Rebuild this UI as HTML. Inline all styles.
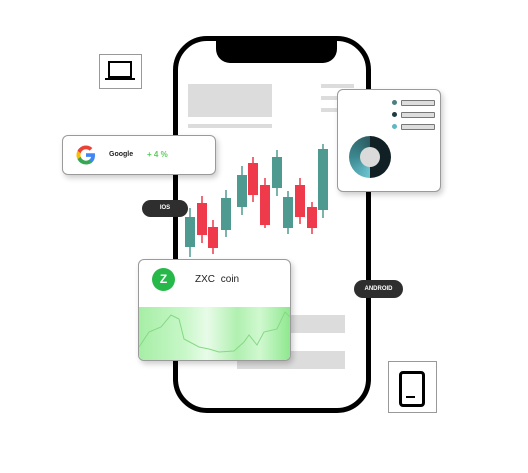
<!DOCTYPE html>
<html><head><style>
body{margin:0;width:528px;height:473px;background:#fff;position:relative;overflow:hidden;font-family:"Liberation Sans",sans-serif}
.a{position:absolute}
.g{background:#dcdcdc}
.card{background:#fff;border:1px solid #9a9a9a;border-radius:6px;box-shadow:2px 3px 6px rgba(0,0,0,.2)}
.pill{background:#2e2e2e;color:#fff;font-size:6px;font-weight:bold;border-radius:9px;text-align:center}
</style></head><body>
<div class="a" style="left:173px;top:36px;width:188px;height:367px;border:5px solid #000;border-radius:34px"></div>
<div class="a" style="left:216px;top:36px;width:121px;height:27px;background:#000;border-radius:0 0 14px 14px"></div>
<div class="a g" style="left:188px;top:84px;width:84px;height:33px"></div>
<div class="a g" style="left:188px;top:124px;width:84px;height:4px"></div>
<div class="a g" style="left:321px;top:84px;width:33px;height:4px"></div>
<div class="a g" style="left:321px;top:96px;width:33px;height:4px"></div>
<div class="a g" style="left:321px;top:108px;width:33px;height:4px"></div>
<div class="a g" style="left:237px;top:315px;width:108px;height:18px"></div>
<div class="a g" style="left:237px;top:351px;width:108px;height:18px"></div>
<svg class="a" style="left:0;top:0" width="528" height="473">
<g stroke-width="1.5">
<line x1="190" y1="208" x2="190" y2="257" stroke="#4f9a90"/><rect x="185" y="217" width="10" height="30" fill="#4f9a90"/>
<line x1="202" y1="196" x2="202" y2="243" stroke="#ee3a4b"/><rect x="197" y="203" width="10" height="32" fill="#ee3a4b"/>
<line x1="213" y1="220" x2="213" y2="254" stroke="#ee3a4b"/><rect x="208" y="227" width="10" height="21" fill="#ee3a4b"/>
<line x1="226" y1="190" x2="226" y2="237" stroke="#4f9a90"/><rect x="221" y="198" width="10" height="32" fill="#4f9a90"/>
<line x1="242" y1="166" x2="242" y2="215" stroke="#4f9a90"/><rect x="237" y="175" width="10" height="32" fill="#4f9a90"/>
<line x1="253" y1="157" x2="253" y2="202" stroke="#ee3a4b"/><rect x="248" y="163" width="10" height="32" fill="#ee3a4b"/>
<line x1="265" y1="178" x2="265" y2="228" stroke="#ee3a4b"/><rect x="260" y="185" width="10" height="40" fill="#ee3a4b"/>
<line x1="277" y1="150" x2="277" y2="196" stroke="#4f9a90"/><rect x="272" y="157" width="10" height="31" fill="#4f9a90"/>
<line x1="288" y1="191" x2="288" y2="234" stroke="#4f9a90"/><rect x="283" y="197" width="10" height="31" fill="#4f9a90"/>
<line x1="300" y1="178" x2="300" y2="224" stroke="#ee3a4b"/><rect x="295" y="185" width="10" height="32" fill="#ee3a4b"/>
<line x1="312" y1="202" x2="312" y2="234" stroke="#ee3a4b"/><rect x="307" y="207" width="10" height="21" fill="#ee3a4b"/>
<line x1="323" y1="144" x2="323" y2="218" stroke="#4f9a90"/><rect x="318" y="149" width="10" height="61" fill="#4f9a90"/>
</g></svg>
<div class="a" style="left:99px;top:54px;width:41px;height:33px;border:1px solid #999;background:#fff"></div>
<svg class="a" style="left:104px;top:59px" width="32" height="24"><rect x="5" y="3" width="22" height="15" fill="none" stroke="#000" stroke-width="2"/><line x1="1" y1="20" x2="31" y2="20" stroke="#000" stroke-width="2"/></svg>
<div class="a card" style="left:62px;top:135px;width:152px;height:38px"></div>
<svg class="a" style="left:74px;top:143px" width="24" height="24" viewBox="0 0 24 24"><path d="M21 12.2c0-.7-.1-1.3-.2-1.9H12v3.6h5.1a4.4 4.4 0 0 1-1.9 2.9v2.4h3.1c1.8-1.7 2.7-4.1 2.7-7z" fill="#4285F4"/><path d="M12 21.5c2.6 0 4.7-.9 6.3-2.3l-3.1-2.4c-.9.6-2 .9-3.2.9-2.5 0-4.6-1.7-5.3-3.9H3.5v2.5A9.5 9.5 0 0 0 12 21.5z" fill="#34A853"/><path d="M6.7 13.8a5.7 5.7 0 0 1 0-3.6V7.7H3.5a9.5 9.5 0 0 0 0 8.6z" fill="#FBBC05"/><path d="M12 6.3c1.4 0 2.7.5 3.7 1.4l2.7-2.7A9.5 9.5 0 0 0 3.5 7.7l3.2 2.5C7.4 8 9.5 6.3 12 6.3z" fill="#EA4335"/></svg>
<div class="a" style="left:109px;top:151px;font-size:7px;font-weight:bold;color:#222">Google</div>
<div class="a" style="left:147px;top:150px;font-size:8px;font-weight:bold;color:#5ccf5c">+ 4 %</div>
<div class="a card" style="left:337px;top:89px;width:102px;height:101px"></div>
<div class="a" style="left:392px;top:100px;width:5px;height:5px;border-radius:50%;background:#4d7f80"></div>
<div class="a" style="left:392px;top:112px;width:5px;height:5px;border-radius:50%;background:#1f3b40"></div>
<div class="a" style="left:392px;top:124px;width:5px;height:5px;border-radius:50%;background:#5fb8c4"></div>
<div class="a" style="left:401px;top:100px;width:32px;height:4px;border:1px solid #777;background:#ddd;border-radius:1px"></div>
<div class="a" style="left:401px;top:112px;width:32px;height:4px;border:1px solid #777;background:#ddd;border-radius:1px"></div>
<div class="a" style="left:401px;top:124px;width:32px;height:4px;border:1px solid #777;background:#ddd;border-radius:1px"></div>
<div class="a" style="left:349px;top:136px;width:42px;height:42px;border-radius:50%;background:conic-gradient(#112024 0 50%,#6bc4d0 50%,#3c8890 75%,#2c5c62)"></div>
<div class="a" style="left:360px;top:147px;width:20px;height:20px;border-radius:50%;background:#dadada"></div>
<div class="a pill" style="left:142px;top:200px;width:46px;height:17px;line-height:17px">IOS</div>
<div class="a pill" style="left:354px;top:280px;width:49px;height:18px;line-height:18px">ANDROID</div>
<div class="a card" style="left:138px;top:259px;width:151px;height:100px;overflow:hidden">
<div class="a" style="left:0;top:47px;width:151px;height:53px;background:linear-gradient(90deg,#a6eea6,#c8f7c8 30%,#e8fbe8 45%,#b0f0b0 65%,#d0f8d0 80%,#8fe88f)"></div>
<svg class="a" style="left:0;top:47px" width="151" height="53"><path d="M0 40 L10 25 L22 20 L32 8 L40 12 L45 32 L60 40 L70 42 L80 45 L95 44 L105 35 L110 28 L118 38 L125 25 L138 22 L146 5 L151 10" fill="none" stroke="#86d886" stroke-width="1"/></svg>
</div>
<div class="a" style="left:152px;top:268px;width:23px;height:23px;border-radius:50%;background:#27b84a"></div>
<div class="a" style="left:158px;top:274px;width:11px;height:11px;color:#fff;font-size:12px;font-weight:bold;line-height:11px;text-align:center">Z</div>
<div class="a" style="left:195px;top:274px;font-size:10px;color:#222;word-spacing:3px">ZXC coin</div>
<div class="a" style="left:388px;top:361px;width:47px;height:50px;border:1px solid #999;background:#fff"></div>
<div class="a" style="left:399px;top:371px;width:20px;height:30px;border:3px solid #000;border-radius:4px"></div>
<div class="a" style="left:406px;top:396px;width:9px;height:2px;background:#000"></div>
</body></html>
